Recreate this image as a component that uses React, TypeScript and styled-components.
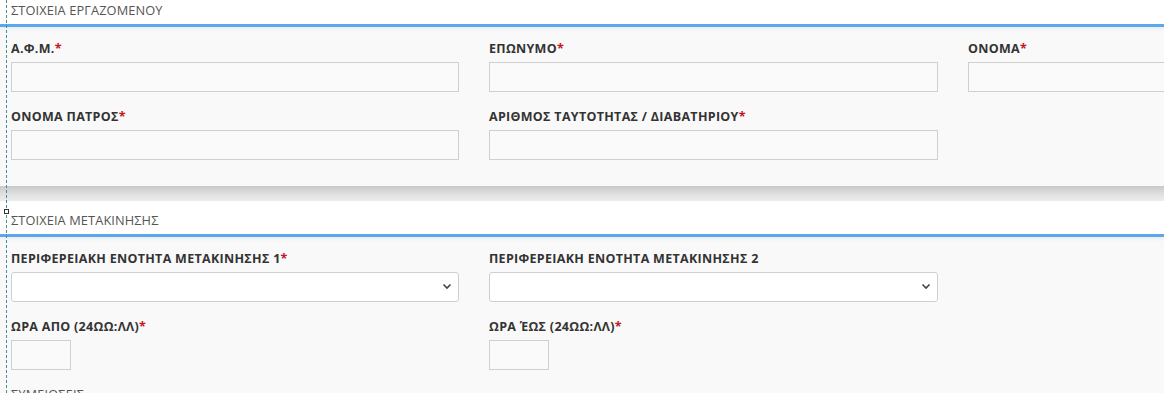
import React from 'react';
import styled, { createGlobalStyle } from 'styled-components';

const GlobalStyle = createGlobalStyle`
    html, body {
        margin: 0;
        padding: 0;
        background: #f9f9f9;
        overflow: hidden;
    }
    body {
        font-family: 'Open Sans', 'Noto Sans', sans-serif;
    }
`;

const Page = styled.div`
    position: relative;
    width: 1164px;
    height: 393px;
    overflow: hidden;
`;

const Scroller = styled.div`
    margin-top: -9px;
`;

const GuideLine = styled.div`
    position: absolute;
    top: 0;
    bottom: 0;
    left: 6px;
    width: 0;
    border-left: 1px dashed #3f8f9c;
    pointer-events: none;
`;

const GuideHandle = styled.div<{ $top: number }>`
    position: absolute;
    left: 4px;
    top: ${(p) => p.$top}px;
    width: 3px;
    height: 3px;
    border: 1px solid #333;
    background: #fff;
`;

const Section = styled.section`
    display: flex;
    flex-direction: column;
`;

const SectionHeader = styled.div`
    height: 36px;
    box-sizing: border-box;
    padding: 4px 11px 0;
    display: flex;
    align-items: center;
    background: #fff;
    border-bottom: 3px solid #5aa8ee;
    color: #555;
    font-size: 12.8px;
    letter-spacing: 0.1px;
`;

const SectionBody = styled.div<{ $pad: number }>`
    background: #f9f9f9;
    padding: 14px 11px ${(p) => p.$pad}px;
    display: flex;
    flex-direction: column;
    gap: 17px;
    box-shadow: inset 0 4px 4px -3px rgba(0, 0, 0, 0.08);
`;

const SectionFoot = styled.div`
    height: 15px;
    background: linear-gradient(#c9c9c9, #e2e2e2 60%, #ececec);
`;

const Row = styled.div`
    display: grid;
    grid-template-columns: 448px 449px 448px;
    column-gap: 30px;
`;

const Field = styled.div`
    display: flex;
    flex-direction: column;
    gap: 5px;
`;

const Label = styled.label<{ $plain?: boolean }>`
    display: block;
    height: 16px;
    line-height: 16px;
    font-size: 12.5px;
    font-weight: ${(p) => (p.$plain ? 400 : 700)};
    color: ${(p) => (p.$plain ? '#555' : '#333')};
    letter-spacing: 0.3px;
    white-space: nowrap;
`;

const Required = styled.span`
    color: #c4161c;
`;

const TextInput = styled.input<{ $width?: number }>`
    width: ${(p) => (p.$width ? `${p.$width}px` : '100%')};
    height: 30px;
    box-sizing: border-box;
    margin: 0;
    border: 1px solid #cfcfcf;
    background: #fafafa;
    padding: 0 8px;
    font: inherit;
    font-size: 12px;
    outline: none;
`;

const SelectWrap = styled.div`
    position: relative;
    height: 30px;
`;

const Select = styled.select`
    width: 100%;
    height: 30px;
    box-sizing: border-box;
    margin: 0;
    appearance: none;
    border: 1px solid #cfcfcf;
    border-radius: 3px;
    background: #fff;
    padding: 0 8px;
    font: inherit;
    font-size: 12px;
    outline: none;
`;

const Chevron = styled.svg`
    position: absolute;
    right: 7px;
    top: 11px;
    pointer-events: none;
`;

function Dropdown() {
    return (
        <SelectWrap>
            <Select defaultValue="">
                <option value=""></option>
            </Select>
            <Chevron width="10" height="7" viewBox="0 0 10 7">
                <path d="M1.5 1.5 L5 5 L8.5 1.5" fill="none" stroke="#444" strokeWidth="1.6" />
            </Chevron>
        </SelectWrap>
    );
}

function FieldLabel({ text, required }: { text: string; required?: boolean }) {
    return (
        <Label>
            {text}
            {required && <Required>*</Required>}
        </Label>
    );
}

export default function App() {
    return (
        <Page>
            <GlobalStyle />
            <Scroller>
                <Section>
                    <SectionHeader>ΣΤΟΙΧΕΙΑ ΕΡΓΑΖΟΜΕΝΟΥ</SectionHeader>
                    <SectionBody $pad={26}>
                        <Row>
                            <Field>
                                <FieldLabel text="Α.Φ.Μ." required />
                                <TextInput />
                            </Field>
                            <Field>
                                <FieldLabel text="ΕΠΩΝΥΜΟ" required />
                                <TextInput />
                            </Field>
                            <Field>
                                <FieldLabel text="ΟΝΟΜΑ" required />
                                <TextInput />
                            </Field>
                        </Row>
                        <Row>
                            <Field>
                                <FieldLabel text="ΟΝΟΜΑ ΠΑΤΡΟΣ" required />
                                <TextInput />
                            </Field>
                            <Field>
                                <FieldLabel text="ΑΡΙΘΜΟΣ ΤΑΥΤΟΤΗΤΑΣ / ΔΙΑΒΑΤΗΡΙΟΥ" required />
                                <TextInput />
                            </Field>
                        </Row>
                    </SectionBody>
                    <SectionFoot />
                </Section>
                <Section>
                    <SectionHeader>ΣΤΟΙΧΕΙΑ ΜΕΤΑΚΙΝΗΣΗΣ</SectionHeader>
                    <SectionBody $pad={20}>
                        <Row>
                            <Field>
                                <FieldLabel text="ΠΕΡΙΦΕΡΕΙΑΚΗ ΕΝΟΤΗΤΑ ΜΕΤΑΚΙΝΗΣΗΣ 1" required />
                                <Dropdown />
                            </Field>
                            <Field>
                                <FieldLabel text="ΠΕΡΙΦΕΡΕΙΑΚΗ ΕΝΟΤΗΤΑ ΜΕΤΑΚΙΝΗΣΗΣ 2" />
                                <Dropdown />
                            </Field>
                        </Row>
                        <Row>
                            <Field>
                                <FieldLabel text="ΩΡΑ ΑΠΟ (24ΩΩ:ΛΛ)" required />
                                <TextInput $width={60} />
                            </Field>
                            <Field>
                                <FieldLabel text="ΩΡΑ ΈΩΣ (24ΩΩ:ΛΛ)" required />
                                <TextInput $width={60} />
                            </Field>
                        </Row>
                        <Row>
                            <Field>
                                <Label $plain>ΣΥΜΕΙΩΣΕΙΣ</Label>
                            </Field>
                        </Row>
                    </SectionBody>
                </Section>
            </Scroller>
            <GuideLine />
            <GuideHandle $top={209} />
        </Page>
    );
}
